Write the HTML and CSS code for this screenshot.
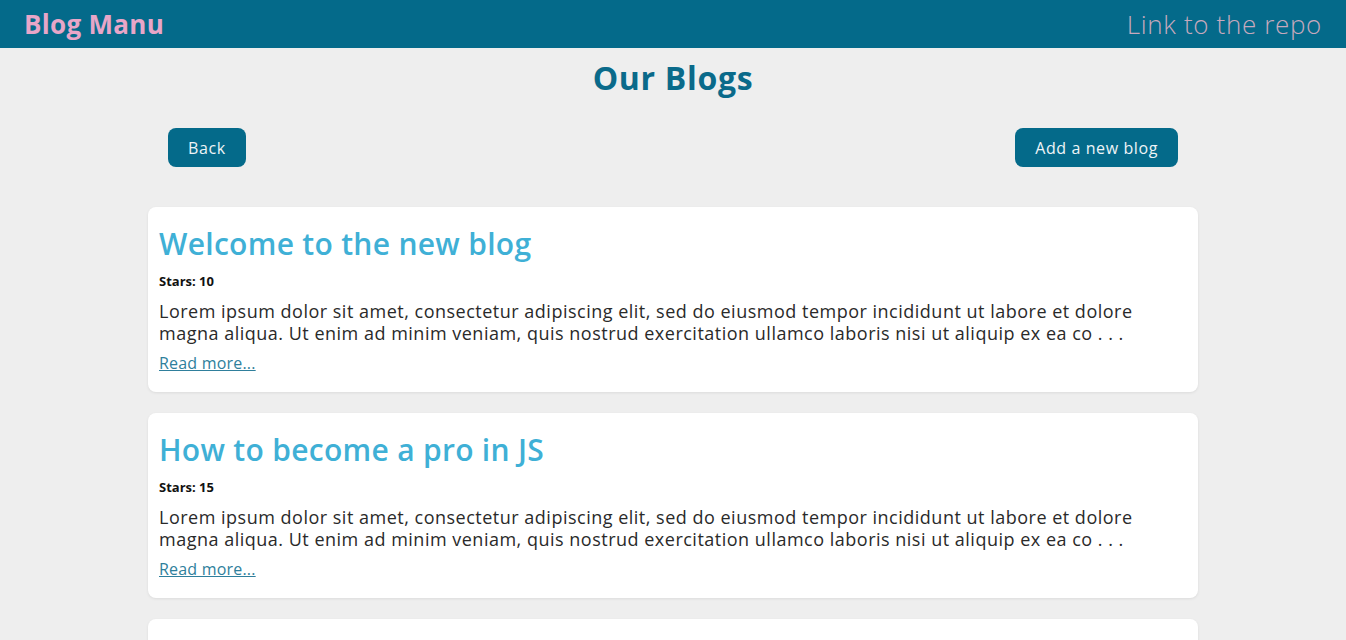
FILE: index.html
```html
<!DOCTYPE html>
<html lang="en">
<head>
<meta charset="utf-8">
<title>Blog Manu</title>
<link rel="stylesheet" href="styles.css">
</head>
<body>
<header class="topbar">
  <a class="brand" href="#">Blog Manu</a>
  <a class="repo" href="#">Link to the repo</a>
</header>
<main class="page">
  <h1 class="page-title">Our Blogs</h1>
  <div class="actions">
    <button class="btn">Back</button>
    <button class="btn">Add a new blog</button>
  </div>
  <section class="list">
    <article class="card">
      <h2 class="card-title">Welcome to the new blog</h2>
      <p class="stars">Stars: 10</p>
      <p class="excerpt">Lorem ipsum dolor sit amet, consectetur adipiscing elit, sed do eiusmod tempor incididunt ut labore et dolore magna aliqua. Ut enim ad minim veniam, quis nostrud exercitation ullamco laboris nisi ut aliquip ex ea co . . .</p>
      <a class="more" href="#">Read more...</a>
    </article>
    <article class="card">
      <h2 class="card-title">How to become a pro in JS</h2>
      <p class="stars">Stars: 15</p>
      <p class="excerpt">Lorem ipsum dolor sit amet, consectetur adipiscing elit, sed do eiusmod tempor incididunt ut labore et dolore magna aliqua. Ut enim ad minim veniam, quis nostrud exercitation ullamco laboris nisi ut aliquip ex ea co . . .</p>
      <a class="more" href="#">Read more...</a>
    </article>
    <article class="card">
      <h2 class="card-title">Learning CSS the easy way</h2>
      <p class="stars">Stars: 5</p>
      <p class="excerpt">Lorem ipsum dolor sit amet, consectetur adipiscing elit, sed do eiusmod tempor incididunt ut labore et dolore magna aliqua.</p>
      <a class="more" href="#">Read more...</a>
    </article>
  </section>
</main>
</body>
</html>
```

FILE: styles.css
```css
* { box-sizing: border-box; }
body {
  margin: 0;
  background: #eeeeee;
  font-family: "Open Sans", "Liberation Sans", sans-serif;
  color: #222;
}
.topbar {
  height: 48px;
  background: #046a8a;
  display: flex;
  align-items: center;
  justify-content: space-between;
  padding: 0 24px;
}
.brand {
  color: #e8a6c8;
  font-weight: 700;
  font-size: 26px;
  letter-spacing: 0.3px;
  text-decoration: none;
}
.repo {
  color: #c7a9bd;
  font-weight: 300;
  font-size: 26px;
  letter-spacing: 0.65px;
  text-decoration: none;
}
.page {
  width: 1050px;
  margin: 0 auto;
  padding-bottom: 40px;
}
.page-title {
  margin: 0;
  padding-top: 10px;
  text-align: center;
  font-size: 32px;
  font-weight: 700;
  letter-spacing: 0.7px;
  color: #0a6a8a;
  line-height: 40px;
}
.actions {
  display: flex;
  justify-content: space-between;
  padding: 30px 20px 0;
}
.btn {
  background: #046a8a;
  color: #eef4f7;
  border: none;
  border-radius: 8px;
  height: 39px;
  padding: 0 20px;
  font-family: inherit;
  font-size: 16px;
  letter-spacing: 0.6px;
}
.list {
  display: flex;
  flex-direction: column;
  gap: 21px;
  margin-top: 40px;
}
.card {
  background: #fff;
  border-radius: 8px;
  box-shadow: 0 1px 3px rgba(0,0,0,0.08);
  padding: 18px 11px 18px;
}
.card-title {
  margin: 0;
  color: #3fb0d6;
  font-size: 30px;
  font-weight: 600;
  letter-spacing: 0.3px;
  line-height: 38px;
}
.stars {
  margin: 10px 0 0;
  font-size: 13px;
  font-weight: 700;
  color: #111;
  line-height: 16px;
}
.excerpt {
  margin: 11px 0 0;
  font-size: 18px;
  line-height: 22px;
  letter-spacing: 0.5px;
  color: #2a2a2a;
  font-weight: 400;
}
.more {
  display: inline-block;
  margin-top: 9px;
  font-size: 16px;
  letter-spacing: 0.2px;
  color: #2f7f9c;
  line-height: 20px;
}
```
